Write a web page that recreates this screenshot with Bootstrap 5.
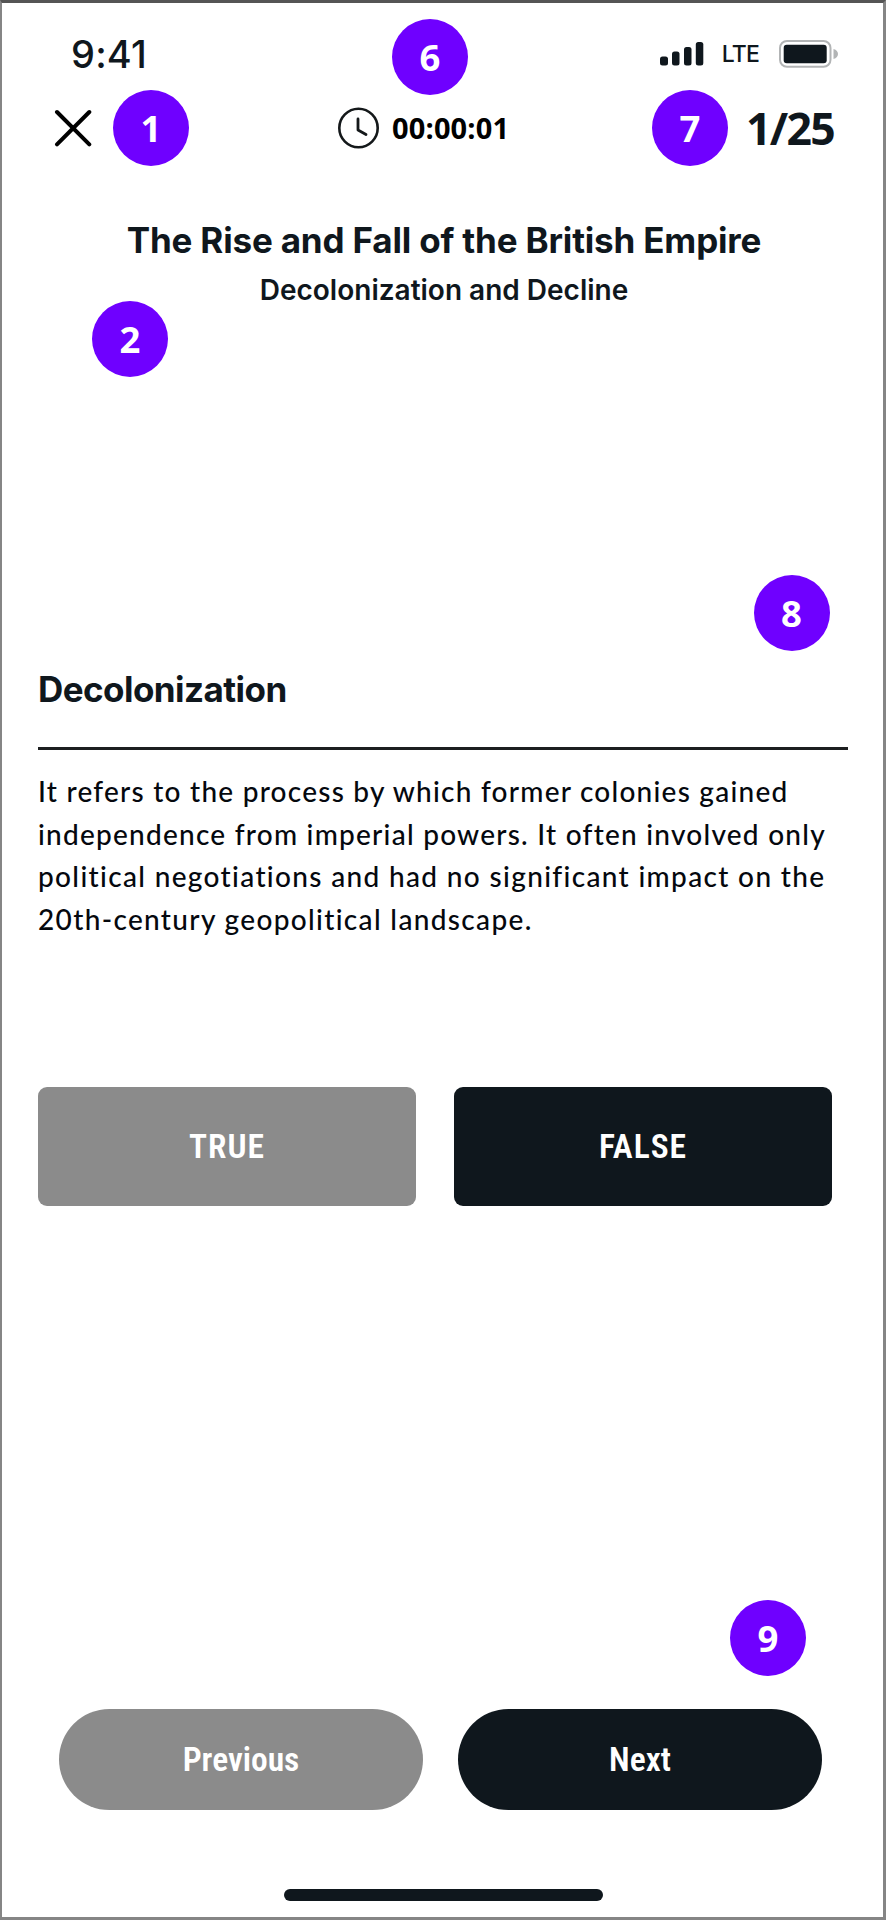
<!DOCTYPE html>
<html lang="en">
<head>
<meta charset="utf-8">
<meta name="viewport" content="width=device-width, initial-scale=1">
<title>Quiz – True or False</title>
<link href="https://cdn.jsdelivr.net/npm/bootstrap@5.3.0/dist/css/bootstrap.min.css" rel="stylesheet">
<style>
  :root { --ink: #0f171d; --muted: #8b8b8b; --pin: #6f00ff; }
  body { font-family: Lato, "Liberation Sans", sans-serif; color: var(--ink); background: #fff; }
  .phone { height: 1920px; border: solid #858585; border-width: 3px 3px 3px 2px; border-top-color: #555; overflow: hidden; font-variant-ligatures: none; }
  .status { height: 101px; padding: 0 44px 0 69px; }
  .clock-text { font: 500 38px/40px Inter, sans-serif; letter-spacing: .2px; }
  .lte { font: 500 23px/28px Inter, sans-serif; letter-spacing: -.8px; margin: 0 20px 0 18px; }
  .toolbar { height: 48px; padding: 0 49px 0 52px; }
  .timer-group { margin-left: 246px; gap: 12px; }
  .timer { font: 700 29px/40px "Open Sans", sans-serif; color: #000; letter-spacing: .15px; }
  .progress-count { font: 700 44.5px/48px "Open Sans", sans-serif; letter-spacing: -1.7px; }
  .quiz-title { font: 700 35px/44px Inter, sans-serif; letter-spacing: -.17px; margin-top: 66px; padding-left: 3px; }
  .quiz-subtitle { font: 600 28px/40px Inter, sans-serif; margin-top: 8px; padding-left: 3px; }
  .question { margin: 357px 35px 0 36px; }
  .question h2 { font: 700 35px/44px Inter, sans-serif; letter-spacing: -.55px; }
  .rule { height: 3px; background: #1d1f20; margin: 36px 0 20px; }
  .statement { font-weight: 500; font-size: 28px; line-height: 42.5px; letter-spacing: 1.24px; color: #05080e; }
  .statement .loose { letter-spacing: 1.34px; }
  .answers { margin: 147.4px 51px 0 36px; gap: 38px; }
  .answers .btn, .pager .btn { --bs-btn-color: #fff; font: 600 33.5px/40px Roboto, sans-serif; font-stretch: 87%; border: 0; }
  .answers .btn { height: 118.3px; border-radius: 9px; letter-spacing: 1px; }
  .pager { margin: 503.3px 61px 0 57px; gap: 35px; }
  .pager .btn { height: 101.3px; border-radius: 51px; }
  .btn-ink { --bs-btn-bg: var(--ink); }
  .btn-muted { --bs-btn-bg: var(--muted); }
  .home-bar { width: 319px; height: 12px; border-radius: 6px; background: var(--ink); margin: 78.3px auto 0 281.5px; }
  /* numbered callouts that lie over the screen */
  .pin { position: absolute; width: 76px; height: 76px; border-radius: 50%; background: var(--pin); color: #fff; font: 700 36.5px/76px "Open Sans", sans-serif; text-align: center; }
  .pin-1 { left: 113px; top: 90px; }
  .pin-2 { left: 92px; top: 300.5px; }
  .pin-6 { left: 392px; top: 19px; }
  .pin-7 { left: 652px; top: 90px; }
  .pin-8 { left: 753.5px; top: 574.5px; }
  .pin-9 { left: 730px; top: 1600px; }
</style>
</head>
<body>
<main class="phone position-relative d-flex flex-column">
  <div class="status d-flex align-items-center">
    <span class="clock-text me-auto">9:41</span>
    <svg width="44" height="24" viewBox="0 0 44 24" fill="#0f171d"><rect x="0" y="14.500" width="8" height="9" rx="2.500"/><rect x="12" y="9.500" width="7.500" height="14" rx="2.500"/><rect x="24" y="5" width="7.500" height="18.500" rx="2.500"/><rect x="35.800" y="0" width="7.500" height="23.500" rx="2.500"/></svg>
    <span class="lte">LTE</span>
    <svg width="60" height="28" viewBox="0 0 60 28"><rect x="1" y="1" width="50.500" height="25.800" rx="7" fill="none" stroke="#b2b4b5" stroke-width="2"/><rect x="4.700" y="4.700" width="43" height="18.500" rx="3" fill="#0f171d"/><path d="M54.500 9v10c6-1.500 6-8.500 0-10z" fill="#b2b4b5"/></svg>
  </div>
  <div class="toolbar d-flex align-items-center">
    <svg width="38" height="38" viewBox="0 0 38 38" fill="none" stroke="#000" stroke-width="4" stroke-linecap="round"><path d="M3 3 35.300 35.300M35.300 3 3 35.300"/></svg>
    <div class="timer-group d-flex align-items-center">
      <svg width="42" height="42" viewBox="0 0 42 42" fill="none" stroke="#14181a" stroke-linecap="round" stroke-linejoin="round"><circle cx="20.500" cy="21" r="19.200" stroke-width="2.600"/><path d="M20 12v11l8 4.500" stroke-width="2.800"/></svg>
      <span class="timer">00:00:01</span>
    </div>
    <span class="progress-count ms-auto">1/25</span>
  </div>
  <h1 class="quiz-title text-center mb-0">The Rise and Fall of the British Empire</h1>
  <p class="quiz-subtitle text-center mb-0">Decolonization and Decline</p>
  <section class="question">
    <h2 class="mb-0">Decolonization</h2>
    <div class="rule"></div>
    <p class="statement mb-0 text-nowrap">It refers to the process by which former colonies gained<br>independence from imperial powers. It often involved only<br><span class="loose">political negotiations and had no significant impact on the<br>20th-century geopolitical landscape.</span></p>
  </section>
  <div class="answers d-flex">
    <button class="btn btn-muted w-50">TRUE</button>
    <button class="btn btn-ink w-50">FALSE</button>
  </div>
  <div class="pager d-flex">
    <button class="btn btn-muted w-50">Previous</button>
    <button class="btn btn-ink w-50">Next</button>
  </div>
  <div class="home-bar"></div>
</main>
<span class="pin pin-1">1</span>
<span class="pin pin-2">2</span>
<span class="pin pin-6">6</span>
<span class="pin pin-7">7</span>
<span class="pin pin-8">8</span>
<span class="pin pin-9">9</span>
<script src="https://cdn.jsdelivr.net/npm/bootstrap@5.3.0/dist/js/bootstrap.bundle.min.js"></script>
</body>
</html>
